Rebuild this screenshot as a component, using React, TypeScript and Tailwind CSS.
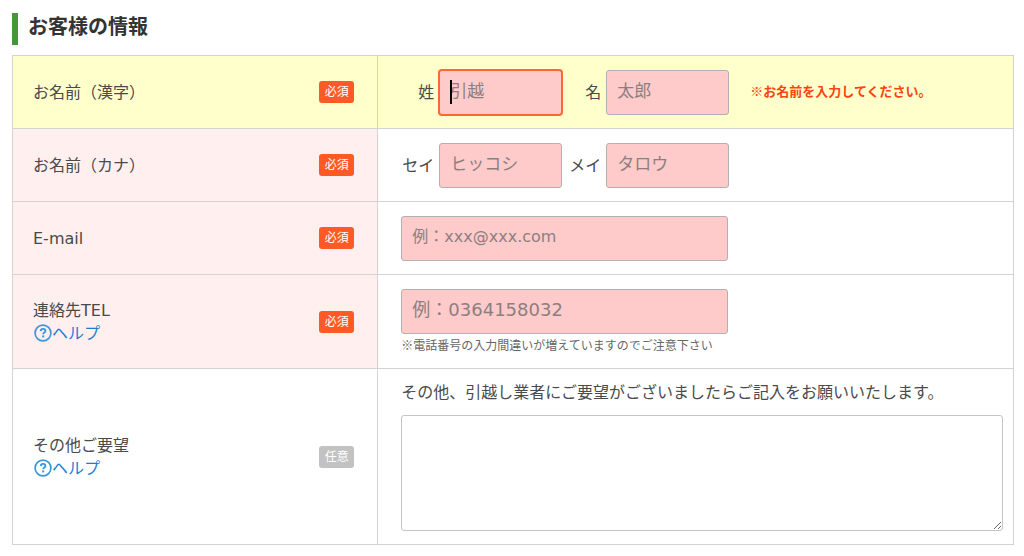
import React from "react";

const inputBase =
  "h-[45px] rounded-[3px] border border-[#b5b0b0] bg-[#ffcaca] pl-2.5 text-[#333] placeholder:text-[#8c7f7f] outline-none";

function Badge({ optional = false }: { optional?: boolean }) {
  return (
    <span
      className={
        "flex h-[22px] w-[35px] shrink-0 items-center justify-center rounded-[3px] text-xs leading-none text-white " +
        (optional ? "bg-[#c2c2c2]" : "bg-[#ff5a26]")
      }
    >
      {optional ? "任意" : "必須"}
    </span>
  );
}

function HelpLink() {
  return (
    <a href="#help" className="flex h-[23px] items-center text-[#1b7fd0]">
      <svg className="ml-px size-[18px] shrink-0" viewBox="0 0 18 18" fill="none" aria-hidden="true">
        <circle cx="9" cy="9" r="7.9" stroke="#3b97dc" strokeWidth="1.7" />
        <path
          d="M6.7 7.1c.1-1.5 1-2.2 2.4-2.2 1.3 0 2.3.7 2.3 2 0 1.7-2.2 1.7-2.2 3.4"
          stroke="#3b97dc"
          strokeWidth="1.9"
        />
        <rect x="8.2" y="11.4" width="2" height="2" fill="#3b97dc" />
      </svg>
      <span className="leading-[23px]">ヘルプ</span>
    </a>
  );
}

type RowProps = {
  label: string;
  htmlFor: string;
  help?: boolean;
  optional?: boolean;
  tone?: string;
  active?: boolean;
  children: React.ReactNode;
};

function Row({ label, htmlFor, help, optional, tone = "bg-[#ffefef]", active, children }: RowProps) {
  return (
    <tr className={active ? "bg-[#ffffcc]" : ""}>
      <th
        scope="row"
        className={"border border-[#d3d3d3] pl-5 pr-[23px] text-left align-middle font-normal " + (active ? "" : tone)}
      >
        <div className="flex items-center justify-between">
          <div>
            <label htmlFor={htmlFor} className="block leading-[23px]">
              {label}
            </label>
            {help && <HelpLink />}
          </div>
          <Badge optional={optional} />
        </div>
      </th>
      <td className="border border-[#d3d3d3] pt-3.5 pb-[13px] pl-[23px] pr-2.5 align-middle">{children}</td>
    </tr>
  );
}

function NameField({
  id,
  label,
  placeholder,
  active,
}: {
  id: string;
  label: string;
  placeholder: string;
  active?: boolean;
}) {
  return (
    <div className="flex items-center gap-[5px]">
      <label htmlFor={id} className="w-[33px] text-right leading-[23px]">
        {label}
      </label>
      <div className="relative flex">
        <input
          id={id}
          type="text"
          placeholder={placeholder}
          className={
            inputBase +
            " w-[123px] pb-1 text-[17px] " +
            (active ? "border-[#ff6634] caret-transparent ring-1 ring-[#ff6634]" : "")
          }
        />
        {active && <span className="absolute left-[11px] top-2.5 h-6 w-0.5 bg-black" />}
      </div>
    </div>
  );
}

export default function App() {
  return (
    <main className="min-h-screen bg-white pt-[13px] pr-2.5 pb-3 pl-3 font-['DejaVu_Sans','Noto_Sans_CJK_JP',sans-serif] text-base text-[#4a4a4a]">
      <h2 className="flex h-8 items-center border-l-6 border-[#46963c] pb-1 pl-2.5 text-xl font-bold text-[#333]">
        お客様の情報
      </h2>
      <form className="mt-2.5">
        <table className="w-full table-fixed border-collapse">
          <colgroup>
            <col className="w-[36.5%]" />
            <col />
          </colgroup>
          <tbody>
            <Row label="お名前（漢字）" htmlFor="sei" active>
              <div className="flex items-center gap-1.5">
                <NameField id="sei" label="姓" placeholder="引越" active />
                <NameField id="mei" label="名" placeholder="太郎" />
                <p className="ml-[15px] pb-1 font-['Noto_Sans_CJK_JP',sans-serif] text-[13px] font-bold text-[#ff4310]">
                  ※お名前を入力してください。
                </p>
              </div>
            </Row>
            <Row label="お名前（カナ）" htmlFor="sei-kana">
              <div className="flex items-center gap-1.5">
                <NameField id="sei-kana" label="セイ" placeholder="ヒッコシ" />
                <NameField id="mei-kana" label="メイ" placeholder="タロウ" />
              </div>
            </Row>
            <Row label="E-mail" htmlFor="email">
              <input
                id="email"
                type="email"
                placeholder="例：xxx@xxx.com"
                className={inputBase + " block w-[327px] pb-1 text-base"}
              />
            </Row>
            <Row label="連絡先TEL" htmlFor="tel" help>
              <input
                id="tel"
                type="tel"
                placeholder="例：0364158032"
                className={inputBase + " block w-[327px] pb-1 text-lg"}
              />
              <p className="h-[21px] font-['Noto_Sans_CJK_JP',sans-serif] text-xs leading-[21px] text-[#666]">
                ※電話番号の入力間違いが増えていますのでご注意下さい
              </p>
            </Row>
            <Row label="その他ご要望" htmlFor="request" help optional tone="bg-white">
              <label htmlFor="request" className="mb-3 block leading-5">
                その他、引越し業者にご要望がございましたらご記入をお願いいたします。
              </label>
              <textarea
                id="request"
                className="block h-[116px] w-full resize rounded-[3px] border border-[#c4c4c4] bg-white p-2.5 outline-none"
              />
            </Row>
          </tbody>
        </table>
      </form>
    </main>
  );
}
